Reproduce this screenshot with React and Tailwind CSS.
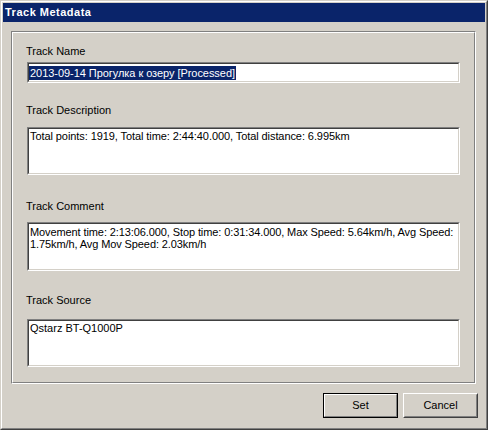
import React from 'react';

// Sunken edit box, classic 3D look
function Sunken({ className = '', children }) {
  return (
    <div className={`ml-[14px] w-[433px] border border-t-[#808080] border-l-[#808080] border-r-white border-b-white ${className}`}>
      <div className="h-full border border-t-[#404040] border-l-[#404040] border-r-[#d4d0c8] border-b-[#d4d0c8] bg-white">
        {children}
      </div>
    </div>
  );
}

function Label({ className = '', children }) {
  return <div className={`pl-[13px] leading-[13px] ${className}`}>{children}</div>;
}

export default function App() {
  return (
    <div className="w-[488px] h-[430px] border border-t-[#d4d0c8] border-l-[#d4d0c8] border-r-[#404040] border-b-[#404040] bg-[#d4d0c8] text-[11px] text-black [font-family:'Liberation_Sans',Arial,sans-serif]">
      <div className="h-full border border-t-white border-l-white border-r-[#808080] border-b-[#808080] p-px flex flex-col">
        {/* Title bar */}
        <div className="h-[19px] shrink-0 bg-[#0a246a] text-white font-bold pl-[2px] tracking-[0.5px] flex items-center">
          Track Metadata
        </div>

        {/* Group box */}
        <div className="ml-[8px] mt-[9px] w-[465px] h-[353px] shrink-0 border border-t-[#808080] border-l-[#808080] border-r-white border-b-white">
          <div className="h-full border border-t-white border-l-white border-r-[#808080] border-b-[#808080] flex flex-col">
            <Label className="mt-[12px]">Track Name</Label>
            <Sunken className="mt-[4px] h-[21px]">
              <div className="pt-px">
                <span className="inline-block bg-[#0a246a] text-white leading-[14px] px-[1px] whitespace-nowrap tracking-[-0.05px]">
                  2013-09-14 Прогулка к озеру [Processed]
                </span>
              </div>
            </Sunken>

            <Label className="mt-[21px]">Track Description</Label>
            <Sunken className="mt-[10px] h-[48px]">
              <div className="pl-[1px] pt-[1px] leading-[13px] whitespace-nowrap tracking-[-0.08px]">
                Total points: 1919, Total time: 2:44:40.000, Total distance: 6.995km
              </div>
            </Sunken>

            <Label className="mt-[25px]">Track Comment</Label>
            <Sunken className="mt-[9px] h-[49px]">
              <div className="pl-[1px] pt-[2px] leading-[12px] whitespace-nowrap tracking-[-0.1px]">
                <div>Movement time: 2:13:06.000, Stop time: 0:31:34.000, Max Speed: 5.64km/h, Avg Speed:</div>
                <div>1.75km/h, Avg Mov Speed: 2.03km/h</div>
              </div>
            </Sunken>

            <Label className="mt-[23px]">Track Source</Label>
            <Sunken className="mt-[12px] h-[48px]">
              <div className="pl-[1px] pt-[1px] leading-[13px] whitespace-nowrap">Qstarz BT-Q1000P</div>
            </Sunken>
          </div>
        </div>

        {/* Buttons */}
        <div className="mt-[9px] flex justify-end gap-[5px] pr-[7px]">
          <button className="w-[75px] h-[25px] border border-black p-0">
            <div className="h-full border border-t-white border-l-white border-r-[#808080] border-b-[#808080] flex items-center justify-center">
              Set
            </div>
          </button>
          <button className="w-[75px] h-[25px] border border-t-white border-l-white border-r-[#404040] border-b-[#404040] p-0">
            <div className="h-full border border-t-[#d4d0c8] border-l-[#d4d0c8] border-r-[#808080] border-b-[#808080] flex items-center justify-center">
              Cancel
            </div>
          </button>
        </div>
      </div>
    </div>
  );
}
